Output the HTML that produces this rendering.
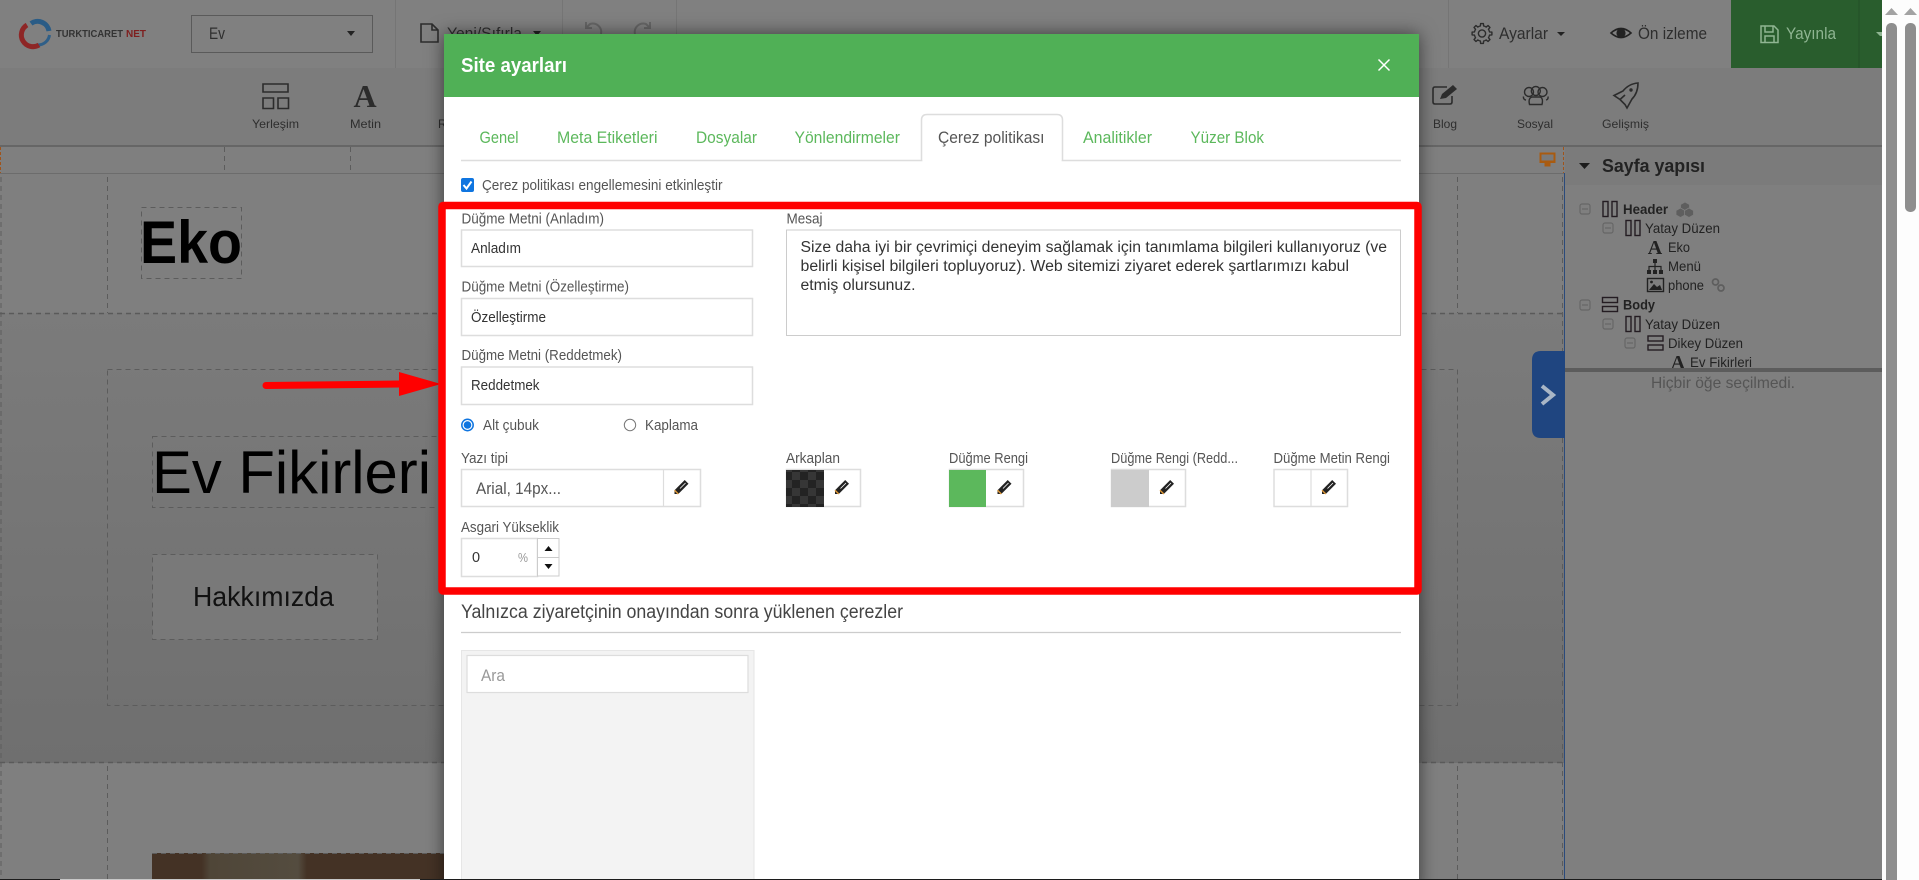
<!DOCTYPE html>
<html lang="tr">
<head>
<meta charset="utf-8">
<title>Site ayarları</title>
<style>
html,body{margin:0;padding:0;width:1919px;height:880px;overflow:hidden;background:#7f7f7f}
svg{display:block}
text{font-family:"Liberation Sans",Arial,sans-serif;white-space:pre}
.tl{font-size:12px;fill:#2e2e2e}
.lb{font-size:14.500px;fill:#555}
.in{font-size:14.500px;fill:#333}
.tab{font-size:16.500px;fill:#5cb85c}
.tr{font-size:14px;fill:#222}
.trb{font-size:14px;fill:#222;font-weight:bold}
.ic{fill:none;stroke:#2c2c2c;stroke-width:1.6}
.box{fill:#fff;stroke:#ddd;stroke-width:1.5}
.dash{fill:none;stroke:#5c5c5c;stroke-width:1;stroke-dasharray:5 4}
.mn{fill:none;stroke:#666;stroke-width:1.2}
</style>
</head>
<body>
<svg xmlns="http://www.w3.org/2000/svg" width="1919" height="880" viewBox="0 0 1919 880">
<defs>
<filter id="sh" x="-5%" y="-10%" width="110%" height="120%"><feDropShadow dx="0" dy="0" stdDeviation="9" flood-color="#000" flood-opacity=".55"/></filter>
<linearGradient id="mid" x1="0" y1="0" x2="0" y2="1"><stop offset="0" stop-color="#7b7b7b"/><stop offset="1" stop-color="#6f6f6f"/></linearGradient>
<linearGradient id="ph" x1="0" y1="0" x2="1" y2="0"><stop offset="0" stop-color="#443225"/><stop offset=".17" stop-color="#443225"/><stop offset=".2" stop-color="#4f4638"/><stop offset=".5" stop-color="#544c3f"/><stop offset=".53" stop-color="#443225"/><stop offset="1" stop-color="#443225"/></linearGradient>
<pattern id="chk" width="16" height="16" patternUnits="userSpaceOnUse"><rect width="16" height="16" fill="#232323"/><rect width="8" height="8" fill="#363636"/><rect x="8" y="8" width="8" height="8" fill="#363636"/></pattern>
<g id="pen"><path d="M3.2-7 7-3.2-3.2 7-7 7-7 3.2Z" fill="#222"/><path d="M-7 3.2-3.2 7" stroke="#e09a3a" stroke-width="1.4"/><path d="M-1.5 1.5 4-4" stroke="#fff" stroke-width=".8"/></g>
<g id="minus"><rect x="-5" y="-5" width="10" height="10" rx="2" class="mn"/><path d="M-3 0H3" class="mn"/></g>
<g id="cols"><rect x="0" y="0" width="5" height="15" fill="none" stroke="#241c22" stroke-width="1.4"/><rect x="9" y="0" width="5" height="15" fill="none" stroke="#241c22" stroke-width="1.4"/></g>
<g id="rows"><rect x="0" y="0" width="15" height="5" fill="none" stroke="#241c22" stroke-width="1.4"/><rect x="0" y="9" width="15" height="5" fill="none" stroke="#241c22" stroke-width="1.4"/></g>
<path id="tooth" d="M-2.95-7.11-1.6-7.53-1.39-9.9 1.39-9.9 1.6-7.53 2.95-7.11" fill="none" stroke="#2c2c2c" stroke-width="1.4" stroke-linejoin="round"/>
</defs>

<!-- page background -->
<rect width="1882" height="880" fill="#7f7f7f"/>

<!-- top bar -->
<rect width="1882" height="68" fill="#808080"/>
<g fill="none" stroke-width="5">
<path d="M31 23.500A11.500 11.500 0 0 1 49 31" stroke="#2a5c86"/>
<path d="M49.500 35A11.500 11.500 0 0 1 38 45" stroke="#2f5f88" stroke-width="3"/>
<path d="M27 25A11.500 11.500 0 0 0 39 45" stroke="#8e2626"/>
</g>
<text x="56" y="37" font-size="10.500" font-weight="bold" fill="#333" textLength="67" lengthAdjust="spacingAndGlyphs">TURKTICARET</text>
<text x="126" y="37" font-size="10.500" font-weight="bold" fill="#7e1f1f" textLength="20" lengthAdjust="spacingAndGlyphs">NET</text>
<rect x="191.500" y="15.500" width="181" height="37" fill="none" stroke="#5a5a5a"/>
<text x="209" y="39" font-size="17" fill="#2e2e2e" textLength="16" lengthAdjust="spacingAndGlyphs">Ev</text>
<path d="M347 31h8l-4 5z" fill="#222"/>
<path d="M395.500 0V68M562.500 0V68M676.500 0V34M1448.500 0V68" stroke="#757575"/>
<path d="M421 24H432L438 30V42H421ZM432 24V30H438" class="ic"/>
<text x="447" y="38.500" font-size="15.500" fill="#2e2e2e" textLength="75" lengthAdjust="spacingAndGlyphs">Yeni/Sıfırla</text>
<path d="M533 31h8l-4 5z" fill="#222"/>
<path d="M601 34A8.500 8.500 0 0 0 590 24L586 28M586 22V28H592" fill="none" stroke="#666" stroke-width="2"/>
<path d="M635 34A8.500 8.500 0 0 1 646 24L650 28M650 22V28H644" fill="none" stroke="#666" stroke-width="2"/>

<g transform="translate(1482 33.500)">
<use href="#tooth"/><use href="#tooth" transform="rotate(45)"/><use href="#tooth" transform="rotate(90)"/><use href="#tooth" transform="rotate(135)"/><use href="#tooth" transform="rotate(180)"/><use href="#tooth" transform="rotate(225)"/><use href="#tooth" transform="rotate(270)"/><use href="#tooth" transform="rotate(315)"/>
<circle r="3.600" fill="none" stroke="#2c2c2c" stroke-width="1.400"/>
</g>
<text x="1499" y="39" font-size="16.500" fill="#2e2e2e" textLength="49" lengthAdjust="spacingAndGlyphs">Ayarlar</text>
<path d="M1557 32h8l-4 4z" fill="#222"/>
<path d="M1611 33Q1621 24 1631 33Q1621 42 1611 33Z" fill="none" stroke="#222" stroke-width="1.600"/><circle cx="1621" cy="33" r="4.600" fill="#222"/>
<text x="1638" y="39" font-size="16.500" fill="#2e2e2e" textLength="69" lengthAdjust="spacingAndGlyphs">Ön izleme</text>
<rect x="1731" width="151" height="68" fill="#295d2d"/>
<path d="M1859 0V68" stroke="#234f27"/>
<path d="M1761 26H1774L1778 30V42.500H1761ZM1765 26V32H1773V26M1765 42.500V36H1774V42.500" fill="none" stroke="#8fb592" stroke-width="1.500"/>
<text x="1786" y="39" font-size="16.500" fill="#8fb592" textLength="50" lengthAdjust="spacingAndGlyphs">Yayınla</text>
<path d="M1876 32h6v4h-2z" fill="#8fb592"/>

<!-- toolbar row -->
<rect y="68" width="1882" height="78" fill="#7c7c7c"/>
<path d="M263 84H288V92H263ZM263 98H273.500V108.500H263ZM278 98H288.500V108.500H278Z" class="ic"/>
<text x="252" y="128" class="tl" textLength="47" lengthAdjust="spacingAndGlyphs">Yerleşim</text>
<text x="365" y="107" text-anchor="middle" style="font-family:'Liberation Serif',serif;font-weight:bold" font-size="32" fill="#2c2c2c">A</text>
<text x="350" y="128" class="tl" textLength="31" lengthAdjust="spacingAndGlyphs">Metin</text>
<text x="438" y="128" class="tl">R</text>
<path d="M1447 87H1435Q1433 87 1433 89V102Q1433 104 1435 104H1450Q1452 104 1452 102V96" class="ic" stroke-width="1.500"/>
<path d="M1440 99 1442 94 1453 85 1457 89 1446 98Z" fill="#2c2c2c"/>
<text x="1433" y="128" class="tl" textLength="24" lengthAdjust="spacingAndGlyphs">Blog</text>
<g class="ic" style="stroke-width:1.400"><circle cx="1529" cy="92" r="4.500"/><circle cx="1542.500" cy="92" r="4.500"/><circle cx="1535.800" cy="91" r="4.500"/><path d="M1526 100Q1523 99.500 1523.500 96.500M1546 100Q1548.500 99.500 1548 96.500M1529.500 104.500Q1528 98 1532 97H1540Q1543.500 98 1542 104.500Z"/></g>
<text x="1517" y="128" class="tl" textLength="36" lengthAdjust="spacingAndGlyphs">Sosyal</text>
<path d="M1638 83C1632 83.500 1627 86 1623 91L1614 95.500 1620 99.500 1625 104.500 1627 108 1632 99C1636 95 1638 89 1638 83ZM1620 99.500 1625 95" class="ic"/><circle cx="1631" cy="90" r="1.700" fill="#2c2c2c"/>
<text x="1602" y="128" class="tl" textLength="47" lengthAdjust="spacingAndGlyphs">Gelişmiş</text>

<rect y="145" width="1882" height="2" fill="#666"/>
<!-- ruler -->
<rect y="147" width="1565" height="26" fill="#7f7f7f"/>
<path d="M0 173.500H1565" stroke="#6c6c6c"/>
<path d="M224.500 147V173M350.500 147V173" class="dash"/>
<path d="M.5 147V173M1563.500 147V173" fill="none" stroke="#a0531a" stroke-dasharray="3 2"/>
<path d="M1540 153H1555V162.500H1540ZM1545 163H1550V166H1545Z" fill="#a95b10" stroke="#a95b10"/><rect x="1541.500" y="154.500" width="12" height="6" fill="#7a7a7a"/>

<!-- canvas -->
<rect y="313" width="1564" height="450" fill="url(#mid)"/>
<path d="M0 313.500H1564M0 762.500H1564" fill="none" stroke="#5a5a5a" stroke-width="1.500" stroke-dasharray="5 4"/>
<path d="M1 177V880M107.500 177V313M107.500 766V880M1457.500 177V313M1457.500 766V880M1562.500 177V880" class="dash"/>
<rect x="107.500" y="369.500" width="1350" height="336" class="dash"/>
<rect x="141.500" y="207.500" width="100" height="71" class="dash"/>
<text x="140" y="263" font-size="60" font-weight="bold" fill="#000" textLength="102" lengthAdjust="spacingAndGlyphs">Eko</text>
<rect x="152.500" y="436.500" width="290" height="71" class="dash"/>
<text x="152" y="493" font-size="60" fill="#000" textLength="279" lengthAdjust="spacingAndGlyphs">Ev Fikirleri</text>
<rect x="152.500" y="554.500" width="225" height="85" fill="#797979" stroke="#5c5c5c" stroke-dasharray="5 4"/>
<text x="193" y="606" font-size="28" fill="#111" textLength="141" lengthAdjust="spacingAndGlyphs">Hakkımızda</text>
<rect x="152" y="853" width="292" height="27" fill="url(#ph)"/>
<path d="M152 853.500H444" class="dash"/>

<!-- right panel -->
<rect x="1565" y="147" width="317" height="733" fill="#7f7f7f"/>
<rect x="1565" y="147" width="317" height="38" fill="#7b7b7b"/>
<path d="M1564.500 173V351M1564.500 438V880" stroke="#2a4a7c"/>
<path d="M1579 163H1590L1584.500 169Z" fill="#1c1c1c"/>
<text x="1602" y="172" font-size="18" font-weight="bold" fill="#222" textLength="103" lengthAdjust="spacingAndGlyphs">Sayfa yapısı</text>

<use href="#minus" x="1585" y="209"/><use href="#cols" x="1603" y="201.500"/>
<text x="1623" y="214" class="trb" textLength="45" lengthAdjust="spacingAndGlyphs">Header</text>
<g fill="#5e5e5e" stroke="#7f7f7f" stroke-width=".8"><path d="M1685 202 1689.500 204.500V209L1685 211.500 1680.500 209V204.500Z"/><path d="M1680.500 208 1685 210.500V215L1680.500 217.500 1676 215V210.500Z"/><path d="M1689 208 1693.500 210.500V215L1689 217.500 1684.500 215V210.500Z"/></g>

<use href="#minus" x="1608" y="228"/><use href="#cols" x="1626" y="220.500"/>
<text x="1645" y="233" class="tr" textLength="75" lengthAdjust="spacingAndGlyphs">Yatay Düzen</text>

<text x="1655" y="254" text-anchor="middle" style="font-family:'Liberation Serif',serif;font-weight:bold" font-size="20" fill="#222">A</text>
<text x="1668" y="252" class="tr" textLength="22" lengthAdjust="spacingAndGlyphs">Eko</text>

<path d="M1653 259H1657V263H1653ZM1647 270H1651V274H1647ZM1653 270H1657V274H1653ZM1659 270H1663V274H1659Z" fill="#222"/>
<path d="M1655 263V270M1649 270V266.500H1661V270" fill="none" stroke="#222" stroke-width="1.200"/>
<text x="1668" y="271" class="tr" textLength="33" lengthAdjust="spacingAndGlyphs">Menü</text>

<rect x="1647.500" y="278.500" width="16" height="13" fill="none" stroke="#222" stroke-width="1.400"/><path d="M1649 290 1654 284 1657 287 1660 285 1662 290Z" fill="#222"/><circle cx="1651.500" cy="282" r="1.400" fill="#222"/>
<text x="1668" y="290" class="tr" textLength="36" lengthAdjust="spacingAndGlyphs">phone</text>
<g fill="none" stroke="#5e5e5e" stroke-width="1.700"><circle cx="1715.500" cy="282" r="3"/><circle cx="1721" cy="288" r="3"/></g>

<use href="#minus" x="1585" y="305"/><use href="#rows" x="1602.500" y="297.500"/>
<text x="1623" y="309.500" class="trb" textLength="32" lengthAdjust="spacingAndGlyphs">Body</text>

<use href="#minus" x="1608" y="324"/><use href="#cols" x="1626" y="316.500"/>
<text x="1645" y="329" class="tr" textLength="75" lengthAdjust="spacingAndGlyphs">Yatay Düzen</text>

<use href="#minus" x="1630" y="343"/><use href="#rows" x="1648" y="336"/>
<text x="1668" y="348" class="tr" textLength="75" lengthAdjust="spacingAndGlyphs">Dikey Düzen</text>

<text x="1678" y="369" text-anchor="middle" style="font-family:'Liberation Serif',serif;font-weight:bold" font-size="20" fill="#222">A</text>
<text x="1690" y="367" class="tr" textLength="62" lengthAdjust="spacingAndGlyphs">Ev Fikirleri</text>
<rect x="1565" y="368" width="317" height="512" fill="#7f7f7f"/>
<rect x="1565" y="368" width="317" height="4" fill="#5c5c5c"/>
<text x="1651" y="388" font-size="16" fill="#555" textLength="144" lengthAdjust="spacingAndGlyphs">Hiçbir öğe seçilmedi.</text>

<!-- collapse handle -->
<path d="M1565 351H1541Q1532 351 1532 360V429Q1532 438 1541 438H1565Z" fill="#1f4580"/>
<path d="M1542 386 1553 395 1542 404" fill="none" stroke="#a9b6c6" stroke-width="4"/>

<!-- arrow -->
<path d="M266 385.500 400 384" stroke="#f00" stroke-width="7" stroke-linecap="round"/>
<path d="M399 372 441 384 399 396Z" fill="#f00"/>

<!-- scrollbars -->
<rect x="1882" width="37" height="880" fill="#fdfdfd"/>
<path d="M1885 15 1891.500 8 1898 15ZM1904 15 1910.500 8 1917 15Z" fill="#a3a3a3"/>
<rect x="1886" y="23" width="11" height="870" rx="5" fill="#8e8e8e"/>
<rect x="1905" y="23" width="11" height="189" rx="5" fill="#8e8e8e"/>

<!-- modal -->
<rect x="444" y="34" width="975" height="860" fill="#fff" filter="url(#sh)"/>
<rect x="444" y="34" width="975" height="63" fill="#50b056"/>
<text x="461" y="72" font-size="20" font-weight="bold" fill="#fff" textLength="106" lengthAdjust="spacingAndGlyphs">Site ayarları</text>
<path d="M1378.500 59.500 1389.500 70.500M1389.500 59.500 1378.500 70.500" stroke="#fff" stroke-width="1.500"/>

<path d="M461 160.500H1401" stroke="#ddd" stroke-width="1.500"/>
<path d="M921.500 160.500V120Q921.500 114.500 927 114.500H1057Q1062.500 114.500 1062.500 120V160.500" fill="#fff" stroke="#ddd" stroke-width="1.500"/>
<rect x="922.500" y="156" width="139" height="6" fill="#fff"/>
<text x="479.500" y="143" class="tab" textLength="39" lengthAdjust="spacingAndGlyphs">Genel</text>
<text x="557" y="143" class="tab" textLength="100.500" lengthAdjust="spacingAndGlyphs">Meta Etiketleri</text>
<text x="696" y="143" class="tab" textLength="61" lengthAdjust="spacingAndGlyphs">Dosyalar</text>
<text x="794.500" y="143" class="tab" textLength="105.500" lengthAdjust="spacingAndGlyphs">Yönlendirmeler</text>
<text x="938" y="143" class="tab" style="fill:#555" textLength="106.500" lengthAdjust="spacingAndGlyphs">Çerez politikası</text>
<text x="1083" y="143" class="tab" textLength="69" lengthAdjust="spacingAndGlyphs">Analitikler</text>
<text x="1190.500" y="143" class="tab" textLength="73.500" lengthAdjust="spacingAndGlyphs">Yüzer Blok</text>

<rect x="461" y="178" width="13" height="14" rx="2" fill="#0f75e0"/>
<path d="M463.500 185 466.500 188.500 471.500 181.500" fill="none" stroke="#fff" stroke-width="2"/>
<text x="482" y="190" class="lb" textLength="240.500" lengthAdjust="spacingAndGlyphs">Çerez politikası engellemesini etkinleştir</text>

<!-- cookie bar settings -->
<text x="461.500" y="223.500" class="lb" textLength="142.500" lengthAdjust="spacingAndGlyphs">Düğme Metni (Anladım)</text>
<rect x="461.500" y="230" width="291" height="36.500" class="box"/>
<text x="471" y="253" class="in" textLength="50" lengthAdjust="spacingAndGlyphs">Anladım</text>
<text x="461.500" y="291.500" class="lb" textLength="167.500" lengthAdjust="spacingAndGlyphs">Düğme Metni (Özelleştirme)</text>
<rect x="461.500" y="298.500" width="291" height="37" class="box"/>
<text x="471" y="322" class="in" textLength="75" lengthAdjust="spacingAndGlyphs">Özelleştirme</text>
<text x="461.500" y="360" class="lb" textLength="160.500" lengthAdjust="spacingAndGlyphs">Düğme Metni (Reddetmek)</text>
<rect x="461.500" y="367" width="291" height="37.500" class="box"/>
<text x="471" y="390" class="in" textLength="68.500" lengthAdjust="spacingAndGlyphs">Reddetmek</text>

<circle cx="467.500" cy="425" r="5.700" fill="#fff" stroke="#0f75e0" stroke-width="1.500"/><circle cx="467.500" cy="425" r="3.800" fill="#0f75e0"/>
<text x="483" y="430" class="lb" textLength="56" lengthAdjust="spacingAndGlyphs">Alt çubuk</text>
<circle cx="630" cy="425" r="5.700" fill="#fff" stroke="#777" stroke-width="1"/>
<text x="645" y="430" class="lb" textLength="53" lengthAdjust="spacingAndGlyphs">Kaplama</text>

<text x="786.500" y="223.500" class="lb" textLength="36" lengthAdjust="spacingAndGlyphs">Mesaj</text>
<rect x="786.500" y="230" width="614" height="105.500" fill="#fff" stroke="#ccc" stroke-width="1"/>
<g font-size="15.500" fill="#333">
<text x="800.500" y="252" textLength="586.500" lengthAdjust="spacingAndGlyphs">Size daha iyi bir çevrimiçi deneyim sağlamak için tanımlama bilgileri kullanıyoruz (ve</text>
<text x="800.500" y="271" textLength="548.500" lengthAdjust="spacingAndGlyphs">belirli kişisel bilgileri topluyoruz). Web sitemizi ziyaret ederek şartlarımızı kabul</text>
<text x="800.500" y="290" textLength="115" lengthAdjust="spacingAndGlyphs">etmiş olursunuz.</text>
</g>

<text x="461" y="463" class="lb" textLength="47" lengthAdjust="spacingAndGlyphs">Yazı tipi</text>
<rect x="461.500" y="469.500" width="239" height="37" class="box"/><path d="M663.500 470V506" stroke="#ddd" stroke-width="1.200"/>
<text x="476" y="494" font-size="16.500" fill="#555" textLength="85" lengthAdjust="spacingAndGlyphs">Arial, 14px...</text>
<use href="#pen" x="681.500" y="487"/>

<text x="786" y="463" class="lb" textLength="54" lengthAdjust="spacingAndGlyphs">Arkaplan</text>
<rect x="786.500" y="469.500" width="74" height="37" class="box" /><rect x="786" y="470" width="38" height="37" fill="url(#chk)"/>
<use href="#pen" x="842" y="487"/>

<text x="949" y="463" class="lb" textLength="79" lengthAdjust="spacingAndGlyphs">Düğme Rengi</text>
<rect x="949.500" y="469.500" width="74" height="37" class="box"/><rect x="949" y="470" width="37" height="37" fill="#5cb85c"/>
<use href="#pen" x="1004.500" y="487"/>

<text x="1111" y="463" class="lb" textLength="127" lengthAdjust="spacingAndGlyphs">Düğme Rengi (Redd...</text>
<rect x="1111.500" y="469.500" width="74" height="37" class="box"/><rect x="1111" y="470" width="38" height="37" fill="#ccc"/>
<use href="#pen" x="1167" y="487"/>

<text x="1273.500" y="463" class="lb" textLength="116.500" lengthAdjust="spacingAndGlyphs">Düğme Metin Rengi</text>
<rect x="1274" y="469.500" width="73.500" height="37" class="box"/><path d="M1311 470V506" stroke="#ddd" stroke-width="1.200"/>
<use href="#pen" x="1329" y="487"/>

<text x="461" y="532" class="lb" textLength="98" lengthAdjust="spacingAndGlyphs">Asgari Yükseklik</text>
<rect x="461.500" y="538.500" width="76" height="38" class="box"/>
<rect x="537.500" y="538.500" width="21.500" height="37.500" fill="#fff" stroke="#ccc"/><path d="M537.500 557.500H559" stroke="#ccc"/>
<text x="472" y="562" class="in">0</text>
<text x="518" y="562" font-size="13" fill="#999" textLength="10" lengthAdjust="spacingAndGlyphs">%</text>
<path d="M544.500 551 548.500 546 552.500 551ZM544.500 564 548.500 569 552.500 564Z" fill="#111"/>

<rect x="442" y="205.500" width="976" height="385.500" rx="1" fill="none" stroke="#f00" stroke-width="7.500"/>

<text x="461" y="618" font-size="19" fill="#444" textLength="442" lengthAdjust="spacingAndGlyphs">Yalnızca ziyaretçinin onayından sonra yüklenen çerezler</text>
<path d="M461 632.500H1401" stroke="#ccc" stroke-width="1.300"/>
<rect x="461.500" y="650.500" width="292.500" height="240" fill="#f3f3f3" stroke="#e6e6e6"/>
<rect x="467" y="655.500" width="281" height="37" fill="#fff" stroke="#ddd" stroke-width="1.200"/>
<text x="481" y="681" font-size="16.500" fill="#999" textLength="24" lengthAdjust="spacingAndGlyphs">Ara</text>

<!-- bottom edge -->
<rect y="879" width="1882" height="1" fill="#1c1c1c"/>
<rect x="60" y="879" width="360" height="1" fill="#c8c8c8"/>
</svg>
</body>
</html>
